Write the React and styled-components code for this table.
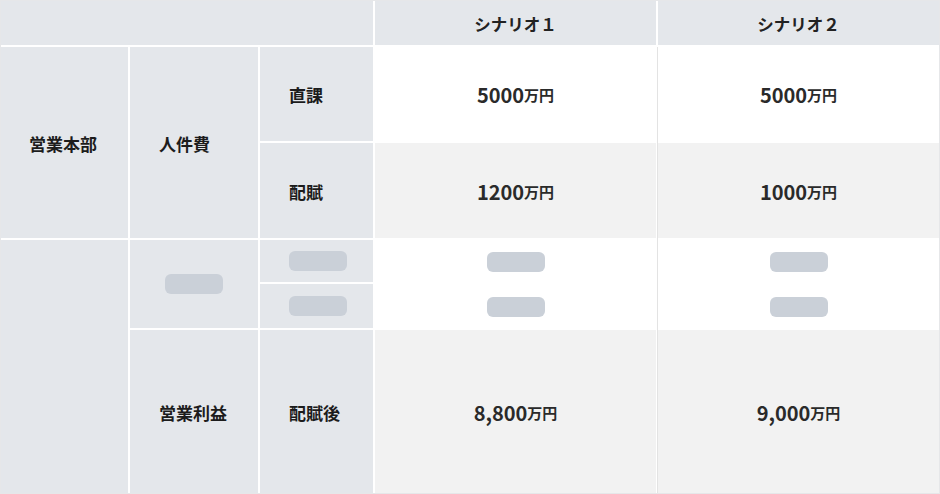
import React from 'react'
import styled, { createGlobalStyle } from 'styled-components'

const GlobalStyle = createGlobalStyle`
    body {
        margin: 0;
        background: #ffffff;
        font-family: "Noto Sans CJK JP", "Noto Sans", sans-serif;
    }
`

const Table = styled.div`
    display: grid;
    grid-template-columns: 127px 128px 113px 1fr 1fr;
    grid-template-rows: 44px 94px 95px 42px 44px 163px;
    gap: 2px;
    width: 940px;
    box-sizing: border-box;
    border: 1px solid #e6e7e9;
    background: #ffffff;
`

const HeadCell = styled.div`
    grid-column: ${p => p.$col};
    grid-row: 1;
    background: #e4e7eb;
    display: flex;
    align-items: center;
    justify-content: center;
    font-size: 16.5px;
    font-weight: 700;
    color: #222222;
    padding-top: 2px;
`

const LabelCell = styled.div`
    grid-column: ${p => p.$col};
    grid-row: ${p => p.$row};
    background: #e4e7eb;
    display: flex;
    align-items: center;
    padding-left: ${p => p.$pad || 29}px;
    font-size: 17px;
    font-weight: 700;
    color: #1c1c1c;
    padding-top: 1px;
`

const SkeletonCell = styled.div`
    grid-column: ${p => p.$col};
    grid-row: ${p => p.$row};
    background: #e4e7eb;
    display: flex;
    align-items: center;
    justify-content: ${p => (p.$left ? 'flex-start' : 'center')};
    padding-left: ${p => (p.$left ? '29px' : '0')};
`

const Bar = styled.div`
    width: 58px;
    height: 20px;
    border-radius: 6px;
    background: #cad0d8;
`

const DataCell = styled.div`
    position: relative;
    grid-column: ${p => p.$col};
    grid-row: ${p => p.$row};
    background: ${p => (p.$shade ? '#f2f2f2' : '#ffffff')};
    display: flex;
    align-items: center;
    justify-content: center;
    color: #2a2a2a;
    font-weight: 700;
    padding-top: 1px;

    &::before {
        content: '';
        display: ${p => (p.$col === 5 ? 'block' : 'none')};
        position: absolute;
        left: -1px;
        top: ${p => (p.$joined ? '-2px' : '0')};
        bottom: 0;
        width: 1px;
        background: #e3e3e3;
    }
`

const Num = styled.span`
    font-size: 20px;
`

const Unit = styled.span`
    font-size: 15px;
`

const Amount = ({ value }) => (
    <>
        <Num>{value}</Num>
        <Unit>万円</Unit>
    </>
)

const App = () => {
    return (
        <>
            <GlobalStyle />
            <Table>
                <HeadCell $col="1 / 4" />
                <HeadCell $col={4}>シナリオ１</HeadCell>
                <HeadCell $col={5}>シナリオ２</HeadCell>

                <LabelCell $col={1} $row="2 / 4" $pad={28}>営業本部</LabelCell>
                <LabelCell $col={2} $row="2 / 4">人件費</LabelCell>
                <LabelCell $col={3} $row={2}>直課</LabelCell>
                <DataCell $col={4} $row={2}><Amount value="5000" /></DataCell>
                <DataCell $col={5} $row={2}><Amount value="5000" /></DataCell>

                <LabelCell $col={3} $row={3}>配賦</LabelCell>
                <DataCell $col={4} $row={3} $shade><Amount value="1200" /></DataCell>
                <DataCell $col={5} $row={3} $shade $joined><Amount value="1000" /></DataCell>

                <LabelCell $col={1} $row="4 / 7" />
                <SkeletonCell $col={2} $row="4 / 6"><Bar /></SkeletonCell>
                <SkeletonCell $col={3} $row={4} $left><Bar /></SkeletonCell>
                <DataCell $col={4} $row={4}><Bar /></DataCell>
                <DataCell $col={5} $row={4} $joined><Bar /></DataCell>

                <SkeletonCell $col={3} $row={5} $left><Bar /></SkeletonCell>
                <DataCell $col={4} $row={5}><Bar /></DataCell>
                <DataCell $col={5} $row={5} $joined><Bar /></DataCell>

                <LabelCell $col={2} $row={6}>営業利益</LabelCell>
                <LabelCell $col={3} $row={6}>配賦後</LabelCell>
                <DataCell $col={4} $row={6} $shade><Amount value="8,800" /></DataCell>
                <DataCell $col={5} $row={6} $shade $joined><Amount value="9,000" /></DataCell>
            </Table>
        </>
    )
}

export default App
